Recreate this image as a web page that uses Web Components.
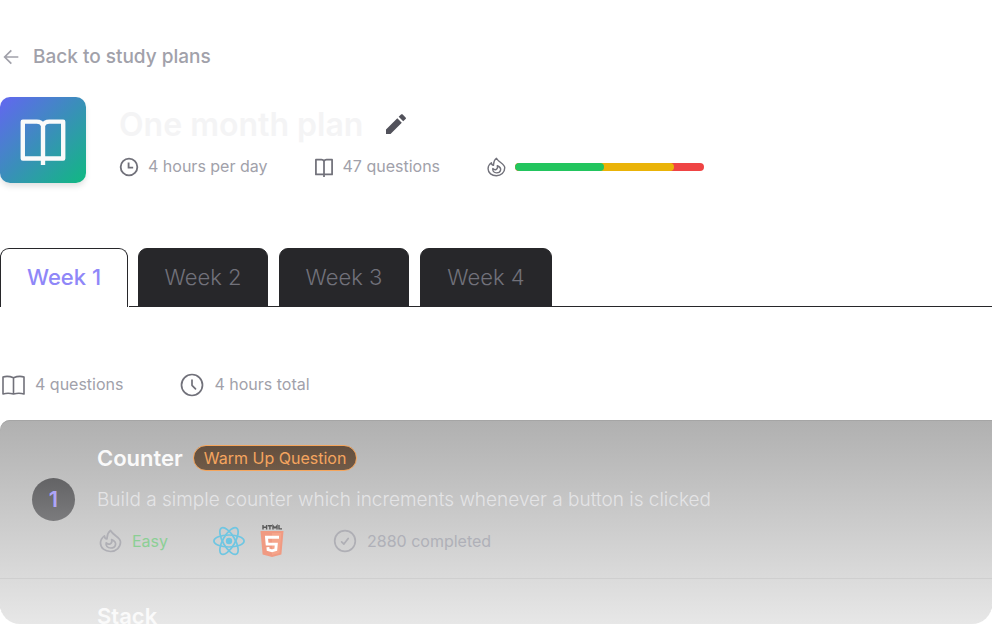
<!DOCTYPE html>
<html lang="en">
<head>
<meta charset="utf-8">
<title>One month plan</title>
<style>
html,body{margin:0;background:#fff}
body{font-family:Inter,"Liberation Sans",sans-serif;height:100vh;overflow:hidden}
</style>
</head>
<body>
<study-plan></study-plan>
<script>
const icons = {
  arrow: ['0 0 24 24', '<path d="M23 12H3M12.500 2L2.500 12L12.500 22" fill="none" stroke="currentColor" stroke-width="2.600"/>'],
  clock: ['0 0 24 24', '<g fill="none" stroke="currentColor" stroke-width="2.200"><circle cx="12" cy="12" r="10"/><path d="M11.500 6.500v6.300h5.500"/></g>'],
  clockThin: ['0 0 24 24', '<g fill="none" stroke="currentColor" stroke-width="1.700" stroke-linecap="round" stroke-linejoin="round"><circle cx="12" cy="12" r="10.500"/><path d="M12 7v5.300l3.500 3.500"/></g>'],
  book: ['0 0 24 24', '<path d="M12 24V5M12 5Q11.200 3.200 9 3.200H2.300v17.700h19.400V3.200h-6.700q-2.200 0-3 1.800" fill="none" stroke="currentColor" stroke-width="2.100" stroke-linejoin="round"/>'],
  bookOpen: ['0 0 24 24', '<path d="M12.500 4.800Q7 2.500 2 4v17q5-1.500 10.500 0q5.500-1.500 10.500 0V4Q18 2.500 12.500 4.800V21" fill="none" stroke="currentColor" stroke-width="1.600" stroke-linejoin="round"/>'],
  pencil: ['0 0 24 24', '<path d="M2 17.500V22h4.500L17.800 10.700l-4.500-4.500zM21.600 7.100c.5-.5.5-1.200 0-1.700l-2.900-2.900c-.5-.5-1.200-.5-1.700 0l-2.300 2.300 4.500 4.500z" fill="currentColor"/>'],
  flame: ['0 0 24 24', '<g fill="none" stroke="currentColor" stroke-width="1.700" stroke-linecap="round" stroke-linejoin="round"><path d="M12.500 1.500C8.800 4.200 9.300 7.100 9 10Q6.500 9.700 6.500 6.900C3.800 8.800 2.500 11.300 2.500 14C2.500 19.200 7 22.500 12.500 22.500s10-4 10-9.500C22.500 8 15.500 7 12.500 1.500z"/><path d="M13.600 10.500c2.800 1.300 4.400 3.200 3.900 5.200c-.5 2.300-2.500 3.300-4.800 3.300c-3.200 0-5.200-2.200-4.500-5.200c1.200 1.300 2.600 1.700 3.900 1.200c1.500-.8 2.200-2.200 1.500-4.500z"/></g>'],
  check: ['0 0 24 24', '<g fill="none" stroke="currentColor" stroke-width="1.700" stroke-linecap="round" stroke-linejoin="round"><circle cx="12" cy="12" r="10.300"/><path d="M8.600 12.800l2.300 2.300 4.300-5.600"/></g>'],
  react: ['-12 -12 24 24', '<circle r="2.400" fill="#6fc6e2"/><g fill="none" stroke="#6fc6e2" stroke-width="1.300"><ellipse rx="11.300" ry="4.500"/><ellipse rx="11.300" ry="4.500" transform="rotate(60)"/><ellipse rx="11.300" ry="4.500" transform="rotate(120)"/></g>'],
  html: ['0 0 24 32', '<path d="M3 0v4.500M6.600 0v4.500M3 2.300h3.600M7.800 .7h4.200M9.900 .7v3.800M13 4.500V.8l2 2.200 2-2.200v3.700M19 0v3.900h3" fill="none" stroke="#5a5a5a" stroke-width="1.400"/><path d="M.5 6h23l-2.100 23.400L12 32l-9.400-2.600z" fill="#f09a82"/><path d="M12 8h9.300l-1.800 20L12 30z" fill="#f5a58b"/><path d="M19 12.300H6.500l.6 6.800h9.200l-.5 5.600-3.800 1.100-3.900-1.100-.2-2.600" fill="none" stroke="#fff" stroke-width="2.900"/>']
};
class Base extends HTMLElement {
  connectedCallback(){
    if(!this.shadowRoot) this.attachShadow({mode:'open'}).innerHTML = this.render();
  }
}
customElements.define('plan-icon', class extends Base {
  render(){
    const [box,body]=icons[this.getAttribute('name')];
    return `<style>:host{display:block;flex:none;width:var(--w,20px);height:var(--h,var(--w,20px))}svg{display:block;width:100%;height:100%;overflow:visible}</style><svg viewBox="${box}" aria-hidden="true">${body}</svg>`;
  }
});
customElements.define('meta-item', class extends Base {
  render(){
    return `<style>:host{display:flex;align-items:center;gap:var(--gap,9px);font-size:16px;line-height:24px;color:#a1a1aa;white-space:nowrap}plan-icon{color:var(--icon,#71717a)}span{padding-bottom:1px}</style><plan-icon name="${this.getAttribute('icon')}"></plan-icon><span><slot></slot></span>`;
  }
});
customElements.define('difficulty-bar', class extends Base {
  render(){
    return `<style>:host{display:flex;width:189px;height:8px;border-radius:4px;background:#ef4444;overflow:hidden}
    .mid{width:84%;background:#eab308;border-radius:4px}
    .easy{width:56%;height:8px;background:#22c55e;border-radius:4px}</style><div class="mid"><div class="easy"></div></div>`;
  }
});
customElements.define('plan-header', class extends Base {
  render(){
    return `<style>
    :host{display:block}
    a{display:inline-flex;align-items:center;gap:14px;padding-left:3px;color:#a1a1aa;text-decoration:none;font-size:19px;font-weight:500;line-height:24px}
    a plan-icon{--w:16px}
    .row{display:flex;gap:33px;margin-top:28px}
    .logo{--w:50px;display:grid;place-items:center;flex:none;width:86px;height:86px;border-radius:10px;background:linear-gradient(135deg,#6366f1,#10b981);color:#fafafa;box-shadow:0 4px 6px -1px #0002}
    .info{flex:1;padding-top:8px}
    .title{display:flex;align-items:center;gap:21px}
    h1{margin:0;font-size:32px;line-height:40px;font-weight:600;color:#f4f4f5}
    button{border:0;padding:0 0 2px;background:none;color:#52525b;--w:24px}
    .meta{display:flex;align-items:center;gap:46px;margin-top:9px}
    .level{display:flex;align-items:center;gap:9px;color:#71717a}
    </style>
    <a href="#plans"><plan-icon name="arrow"></plan-icon>Back to study plans</a>
    <div class="row"><div class="logo"><plan-icon name="book"></plan-icon></div>
    <div class="info"><div class="title"><h1>One month plan</h1><button type="button" aria-label="Edit plan"><plan-icon name="pencil"></plan-icon></button></div>
    <div class="meta"><meta-item icon="clock">4 hours per day</meta-item><meta-item icon="book">47 questions</meta-item><div class="level"><plan-icon name="flame"></plan-icon><difficulty-bar></difficulty-bar></div></div></div></div>`;
  }
});
customElements.define('week-tabs', class extends Base {
  render(){
    return `<style>
    :host{display:flex;gap:11px;background:linear-gradient(#27272a,#27272a) 129px 100%/100% 1px no-repeat}
    button{flex:none;box-sizing:border-box;width:130px;height:59px;padding:0 0 1px;border:1px solid #27272a;border-radius:9px 9px 0 0;background:#27272a;color:#71717a;font:350 22px/28px Inter,"Liberation Sans",sans-serif}
    button:last-child{width:132px}
    button[aria-selected=true]{width:128px;margin-right:-1px;padding-bottom:2px;background:#fff;color:#8f87f8;font-weight:500;border-bottom:0}
    </style>${[1,2,3,4].map(n=>`<button type="button" role="tab" aria-selected="${n===1}">Week ${n}</button>`).join('')}`;
  }
});
customElements.define('question-card', class extends Base {
  render(){
    return `<style>
    :host{display:flex;align-items:center;gap:22px;padding:24px 32px 21px;border-bottom:1px solid #cfcfcf}
    .num{display:grid;place-items:center;box-sizing:border-box;flex:none;width:43px;height:43px;margin-bottom:2px;padding-bottom:2px;border-radius:50%;background:linear-gradient(#636365,#7b7b7d);color:#afa5f7;font-size:22px;line-height:28px;font-weight:600}
    .head{display:flex;align-items:center;gap:10px}
    h2{margin:0;font-size:22px;line-height:28px;font-weight:600;color:#fafafa}
    .tag{box-sizing:border-box;height:26px;padding:0 10px;border:1px solid #f5a55c;border-radius:13px;background:linear-gradient(#634e3d,#6f5a48);color:#f5a55f;font-size:16px;line-height:24px}
    p{margin:14px 0 0;font-size:19px;line-height:28px;font-weight:350;color:#e4e4e6}
    .meta{display:flex;align-items:center;height:32px;margin:11px 0 0 1px}
    meta-item{--w:24px;--gap:10px;--icon:#afafb5;color:#afb0b8}
    .easy{color:#8ccf95}
    .tech{display:flex;gap:15px;margin:0 49px 0 45px}
    .tech plan-icon{--w:32px;--h:32px}.tech .html{--w:24px}
    </style>
    <div class="num">1</div><div><div class="head"><h2>Counter</h2><span class="tag">Warm Up Question</span></div>
    <p>Build a simple counter which increments whenever a button is clicked</p>
    <div class="meta"><meta-item class="easy" icon="flame">Easy</meta-item><div class="tech"><plan-icon name="react"></plan-icon><plan-icon class="html" name="html"></plan-icon></div><meta-item icon="check">2880 completed</meta-item></div></div>`;
  }
});
customElements.define('study-plan', class extends Base {
  render(){
    return `<style>
    :host{display:flex;flex-direction:column;box-sizing:border-box;height:100vh;padding-top:45px}
    week-tabs{margin-top:65px}
    .summary{display:flex;gap:57px;margin:65px 0 23px 1px}
    meta-item{--w:24px;--gap:10px}
    .list{flex:1;min-height:0;overflow:hidden;border-radius:10px 0 20px 20px;background:linear-gradient(#b0b0b0,#e7e7e7);box-shadow:inset 0 1px #a5a5a5}
    h2{margin:23px 97px 0;font-size:22px;line-height:28px;font-weight:600;color:#fafafa}
    </style>
    <plan-header></plan-header><week-tabs role="tablist"></week-tabs>
    <div class="summary"><meta-item icon="bookOpen">4 questions</meta-item><meta-item icon="clockThin">4 hours total</meta-item></div>
    <div class="list"><question-card></question-card><h2>Stack</h2></div>`;
  }
});
</script>
</body>
</html>
